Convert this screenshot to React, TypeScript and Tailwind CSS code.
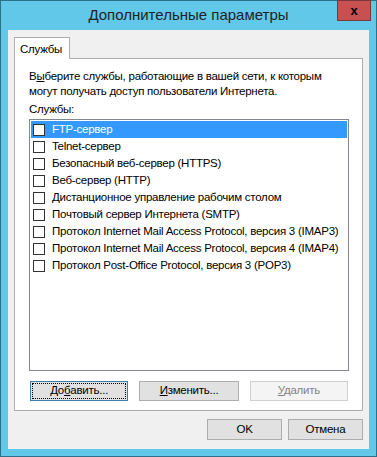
import React from 'react'

const services = [
  'FTP-сервер',
  'Telnet-сервер',
  'Безопасный веб-сервер (HTTPS)',
  'Веб-сервер (HTTP)',
  'Дистанционное управление рабочим столом',
  'Почтовый сервер Интернета (SMTP)',
  'Протокол Internet Mail Access Protocol, версия 3 (IMAP3)',
  'Протокол Internet Mail Access Protocol, версия 4 (IMAP4)',
  'Протокол Post-Office Protocol, версия 3 (POP3)',
]

const font = { fontFamily: '"Liberation Sans", Arial, sans-serif' }

export default function App() {
  return (
    <div
      className="flex h-[457px] w-[377px] flex-col border border-[#2f6f8a] bg-[#62c8ea] text-[11.5px] tracking-[-0.25px] text-black"
      style={font}
    >
      {/* title bar */}
      <div className="relative flex h-[29px] shrink-0 items-center justify-center">
        <span className="text-[15px] tracking-normal text-[#222]">Дополнительные параметры</span>
        <button className="absolute right-[5px] top-[-1px] flex h-[21px] w-[34px] items-center justify-center border border-[#7a3a3a] bg-[#c75050] text-[13px] font-bold leading-none text-black">
          x
        </button>
      </div>

      {/* client area */}
      <div className="mx-[7px] flex flex-1 flex-col bg-[#f0f0f0] px-[6px] pb-[7px]">
        <div className="mt-[7px] flex">
          <div className="relative z-10 -mb-px flex h-[22px] w-[56px] items-start border border-b-0 border-[#adadad] bg-white px-[5px] pt-[3px]">
            Службы
          </div>
        </div>

        <div className="flex w-[349px] flex-col border border-[#adadad] bg-white px-[14px] pb-[9px] pt-[10px]">
          <p className="leading-[15px]">
            В<span className="underline">ы</span>берите службы, работающие в вашей сети, к которым
            <br />
            могут получать доступ пользователи Интернета.
          </p>
          <p className="mt-[3px] leading-[15px]">Службы:</p>

          <div className="mt-[2px] h-[252px] w-[320px] border border-[#828790] bg-white p-px">
            {services.map((s, i) => (
              <div
                key={s}
                className={
                  i === 0
                    ? 'flex h-[17px] items-center gap-[6px] bg-[#3399ff] pl-[2px] text-white'
                    : 'flex h-[17px] items-center gap-[6px] pl-[2px]'
                }
              >
                <span className="h-[12px] w-[12px] shrink-0 border border-[#333] bg-white" />
                <span className="whitespace-nowrap pl-[1px]">{s}</span>
              </div>
            ))}
          </div>

          <div className="mt-[10px] flex justify-end gap-[11px] pl-[1px]">
            <button className="flex h-[20px] w-[99px] items-center justify-center border border-[#3c7fb1] bg-[#e1e1e1] p-px">
              <span className="flex h-full w-full items-center justify-center border border-dotted border-black">
                До<span className="underline">б</span>авить...
              </span>
            </button>
            <button className="flex h-[20px] w-[100px] items-center justify-center border border-[#adadad] bg-[#e1e1e1]">
              <span>
                <span className="underline">И</span>зменить...
              </span>
            </button>
            <button className="flex h-[20px] w-[99px] items-center justify-center border border-[#cfcfcf] bg-[#f4f4f4] text-[#838383]">
              <span>
                <span className="underline">У</span>далить
              </span>
            </button>
          </div>
        </div>

        <div className="mt-[8px] flex justify-end gap-[6px]">
          <button className="flex h-[21px] w-[75px] items-center justify-center border border-[#adadad] bg-[#e1e1e1]">
            OK
          </button>
          <button className="flex h-[21px] w-[75px] items-center justify-center border border-[#adadad] bg-[#e1e1e1]">
            Отмена
          </button>
        </div>
      </div>
      <div className="h-[7px] shrink-0" />
    </div>
  )
}
